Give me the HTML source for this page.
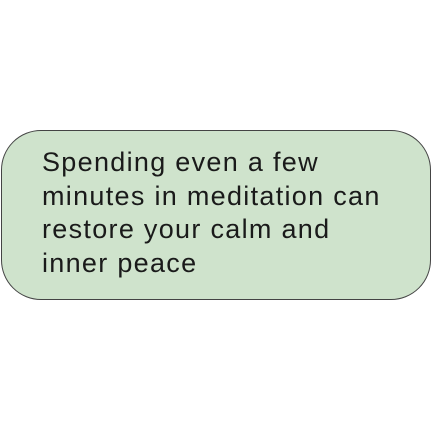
<!DOCTYPE html>
<html><head><style>
html,body{margin:0;padding:0;background:#fff;width:432px;height:432px;overflow:hidden}
.b{position:absolute;left:1px;top:130px;width:430px;height:170px;background:#cfe3cc;border:1.5px solid #444;border-radius:40px;box-sizing:border-box}
.t{position:absolute;left:42px;top:146px;font-family:"Liberation Sans",sans-serif;font-size:27px;line-height:33.5px;color:#1a1a1a;white-space:pre;letter-spacing:1.3px}
</style></head><body>
<div class="b"></div>
<div class="t">Spending even a few
minutes in meditation can
restore your calm and
inner peace</div>
</body></html>
